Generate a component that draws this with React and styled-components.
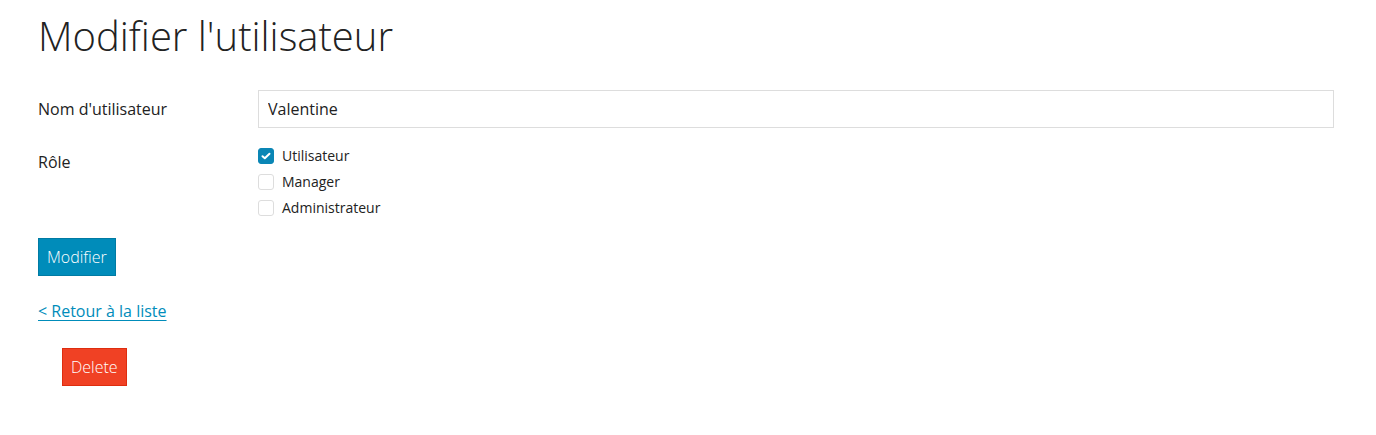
import React, { useState } from 'react';
import styled, { createGlobalStyle } from 'styled-components';

const GlobalStyle = createGlobalStyle`
  body {
    margin: 0;
    background: #fff;
    font-family: "Open Sans", "Liberation Sans", sans-serif;
    color: #222;
  }
`;

const Page = styled.div`
  padding: 8px 42px 0 38px;
`;

const Title = styled.h1`
  margin: 0 0 26px;
  font-size: 40px;
  font-weight: 300;
  line-height: 56px;
  color: #222;
`;

const Row = styled.div`
  display: grid;
  grid-template-columns: 220px 1fr;
  align-items: start;
  margin-bottom: ${p => p.$gap || 0}px;
`;

const Label = styled.label`
  font-size: 16px;
  line-height: 20px;
  padding-top: ${p => p.$top || 0}px;
  color: #222;
`;

const TextInput = styled.input`
  box-sizing: border-box;
  width: 100%;
  height: 38px;
  border: 1px solid #ddd;
  padding: 0 9px;
  font-family: inherit;
  font-size: 16px;
  color: #222;
  outline: none;
`;

const Checks = styled.div`
  display: flex;
  flex-direction: column;
  gap: 6px;
`;

const CheckRow = styled.label`
  display: flex;
  align-items: center;
  gap: 8px;
  font-size: 14px;
  line-height: 20px;
  cursor: pointer;
`;

const Box = styled.span`
  box-sizing: border-box;
  width: 16px;
  height: 16px;
  border-radius: 3px;
  border: 1px solid ${p => (p.$on ? '#0a86b5' : '#ddd')};
  background: ${p => (p.$on ? '#0a86b5' : '#fff')};
  display: flex;
  align-items: center;
  justify-content: center;
`;

const Button = styled.button`
  font-family: inherit;
  font-size: 16px;
  font-weight: 300;
  color: #fff;
  background: ${p => p.$bg};
  border: 1px solid ${p => p.$border};
  height: 38px;
  padding: 0 8px;
  cursor: pointer;
  margin-left: ${p => p.$indent || 0}px;
`;

const BackLink = styled.a`
  display: inline-block;
  color: #008cba;
  font-size: 16px;
  text-decoration: underline;
  text-underline-offset: 3px;
  margin: 24px 0 26px;
`;

const roles = ['Utilisateur', 'Manager', 'Administrateur'];

const App = () => {
  const [name, setName] = useState('Valentine');
  const [checked, setChecked] = useState({ Utilisateur: true });

  const toggle = (role) => setChecked({ ...checked, [role]: !checked[role] });

  return (
    <Page>
      <GlobalStyle />
      <Title>Modifier l'utilisateur</Title>
      <Row $gap={18}>
        <Label $top={9}>Nom d'utilisateur</Label>
        <TextInput value={name} onChange={(e) => setName(e.target.value)} />
      </Row>
      <Row $gap={20}>
        <Label $top={6}>Rôle</Label>
        <Checks>
          {roles.map((role) => (
            <CheckRow key={role} onClick={() => toggle(role)}>
              <Box $on={!!checked[role]}>
                {checked[role] && (
                  <svg width="10" height="8" viewBox="0 0 10 8">
                    <path d="M1.5 4.2 L3.8 6.3 L8.5 1.7" fill="none" stroke="#fff" strokeWidth="2" strokeLinecap="round" strokeLinejoin="round" />
                  </svg>
                )}
              </Box>
              {role}
            </CheckRow>
          ))}
        </Checks>
      </Row>
      <div>
        <Button $bg="#008cba" $border="#007ba3">Modifier</Button>
      </div>
      <BackLink href="#">&lt; Retour à la liste</BackLink>
      <div>
        <Button $bg="#f04124" $border="#de2d0f" $indent={24}>Delete</Button>
      </div>
    </Page>
  );
};

export default App;
